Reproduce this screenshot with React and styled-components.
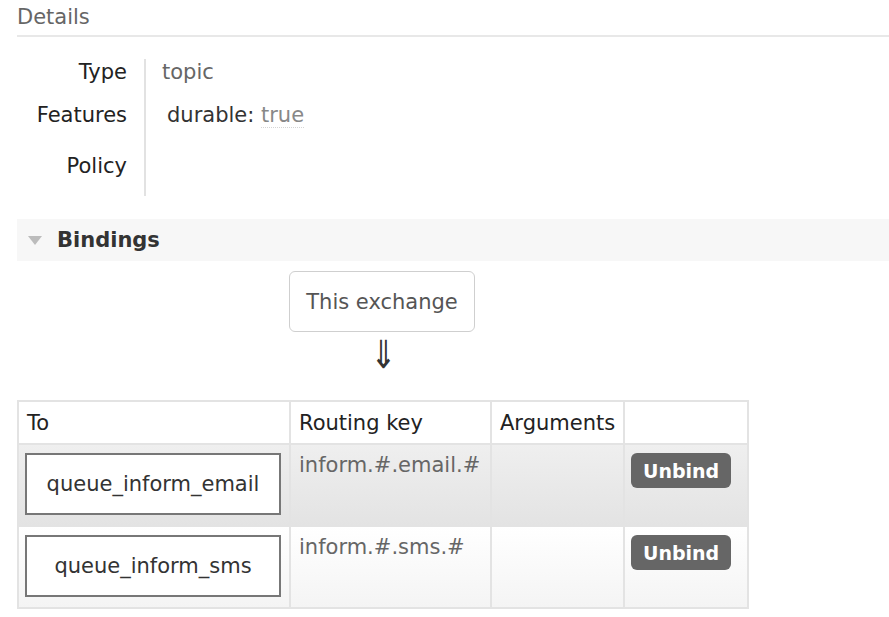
import React from 'react'
import styled, { createGlobalStyle } from 'styled-components'

const GlobalStyle = createGlobalStyle`
  body {
    margin: 0;
    background: #fff;
    font-family: "DejaVu Sans", Verdana, sans-serif;
    font-size: 21px;
    color: #444;
  }
`

const facts = [
  { label: 'Type', value: 'topic', h: 43 },
  { label: 'Features', h: 51, feature: true },
  { label: 'Policy', value: '', h: 43 },
]

const bindings = [
  { queue: 'queue_inform_email', key: 'inform.#.email.#', alt: 1 },
  { queue: 'queue_inform_sms', key: 'inform.#.sms.#', alt: 2 },
]

export default function App() {
  return (
    <Page>
      <GlobalStyle />
      <SectionTitle>Details</SectionTitle>
      <Facts>
        {facts.map((f) => (
          <FactRow key={f.label} $h={f.h}>
            <FactLabel>{f.label}</FactLabel>
            <FactValue>
              {f.feature ? (
                <Feature>
                  durable: <Abbr>true</Abbr>
                </Feature>
              ) : (
                f.value
              )}
            </FactValue>
          </FactRow>
        ))}
      </Facts>

      <SectionBar>
        <Triangle />
        <BarTitle>Bindings</BarTitle>
      </SectionBar>

      <BindingsWrap>
        <ExchangeBox>This exchange</ExchangeBox>
        <ArrowRow>
          <Arrow>⇓</Arrow>
        </ArrowRow>
        <Table>
          <colgroup>
            <col style={{ width: 272 }} />
            <col style={{ width: 201 }} />
            <col style={{ width: 133 }} />
            <col style={{ width: 124 }} />
          </colgroup>
          <thead>
            <tr>
              <Th>To</Th>
              <Th>Routing key</Th>
              <Th>Arguments</Th>
              <Th></Th>
            </tr>
          </thead>
          <tbody>
            {bindings.map((b) => (
              <Row key={b.queue} $alt={b.alt}>
                <QueueCell>
                  <QueueBox>{b.queue}</QueueBox>
                </QueueCell>
                <Td>{b.key}</Td>
                <Td></Td>
                <ButtonCell>
                  <UnbindButton>Unbind</UnbindButton>
                </ButtonCell>
              </Row>
            ))}
          </tbody>
        </Table>
      </BindingsWrap>
    </Page>
  )
}

const Page = styled.div`
  padding: 5px 0 0 17px;
`

const SectionTitle = styled.h2`
  margin: 0;
  padding-bottom: 6px;
  font-size: 21px;
  line-height: 24px;
  font-weight: normal;
  color: #666;
  border-bottom: 2px solid #e8e8e8;
`

const Facts = styled.div`
  margin-top: 22px;
  display: flex;
  flex-direction: column;
`

const FactRow = styled.div`
  display: flex;
  height: ${(p) => p.$h}px;
  line-height: 24px;
`

const FactLabel = styled.div`
  width: 110px;
  padding: 1px 17px 0 0;
  text-align: right;
  color: #222;
`

const FactValue = styled.div`
  border-left: 2px solid #e2e2e2;
  padding: 1px 0 0 16px;
  color: #666;
`

const Feature = styled.span`
  padding-left: 5px;
  color: #333;
`

const Abbr = styled.abbr`
  color: #888;
  text-decoration: none;
  border-bottom: 1px dotted #d5d5d5;
`

const SectionBar = styled.div`
  margin-top: 23px;
  height: 42px;
  background: #f7f7f7;
  display: flex;
  align-items: center;
  padding-left: 11px;
`

const Triangle = styled.span`
  width: 0;
  height: 0;
  border-left: 7.5px solid transparent;
  border-right: 7.5px solid transparent;
  border-top: 9px solid #bcbcbc;
  margin: 1px 15px 0 0;
`

const BarTitle = styled.span`
  font-weight: bold;
  color: #333;
`

const BindingsWrap = styled.div`
  width: 730px;
  margin-top: 10px;
`

const ExchangeBox = styled.div`
  width: 186px;
  height: 61px;
  box-sizing: border-box;
  margin: 0 auto;
  border: 1.5px solid #cfcfcf;
  border-radius: 6px;
  display: flex;
  align-items: center;
  justify-content: center;
  color: #555;
`

const ArrowRow = styled.div`
  height: 40px;
  display: flex;
  justify-content: center;
  align-items: center;
  padding: 4px 0 0 3px;
  box-sizing: border-box;
`

const Arrow = styled.span`
  display: inline-block;
  font-size: 31px;
  line-height: 1;
  color: #333;
  transform: scaleY(1.25);
`

const Table = styled.table`
  margin-top: 28px;
  width: 730px;
  table-layout: fixed;
  border-collapse: collapse;
  border: 2px solid #e3e3e3;
`

const Th = styled.th`
  height: 41px;
  padding: 0 8px;
  text-align: left;
  font-weight: normal;
  color: #222;
  border: 2px solid #e3e3e3;
  background: #fff;
  white-space: nowrap;
`

const Row = styled.tr`
  height: 82px;
  background: ${(p) =>
    p.$alt === 1
      ? 'linear-gradient(to bottom, #efefef 0%, #e3e3e3 100%)'
      : 'linear-gradient(to bottom, #ffffff 0%, #f4f4f4 100%)'};
`

const Td = styled.td`
  vertical-align: top;
  padding: 8px 8px;
  color: #666;
  border: 2px solid #e3e3e3;
  line-height: 24px;
`

const QueueCell = styled(Td)`
  padding: 8px 8px 0 6px;
`

const QueueBox = styled.div`
  width: 256px;
  height: 62px;
  box-sizing: border-box;
  border: 2px solid #777;
  background: #fff;
  display: flex;
  align-items: center;
  justify-content: center;
  color: #333;
`

const ButtonCell = styled(Td)`
  padding: 8px 6px;
`

const UnbindButton = styled.button`
  height: 35px;
  padding: 0 12px;
  border: none;
  border-radius: 6px;
  background: #666;
  color: #fff;
  font-family: inherit;
  font-size: 19px;
  font-weight: bold;
  cursor: pointer;
`
